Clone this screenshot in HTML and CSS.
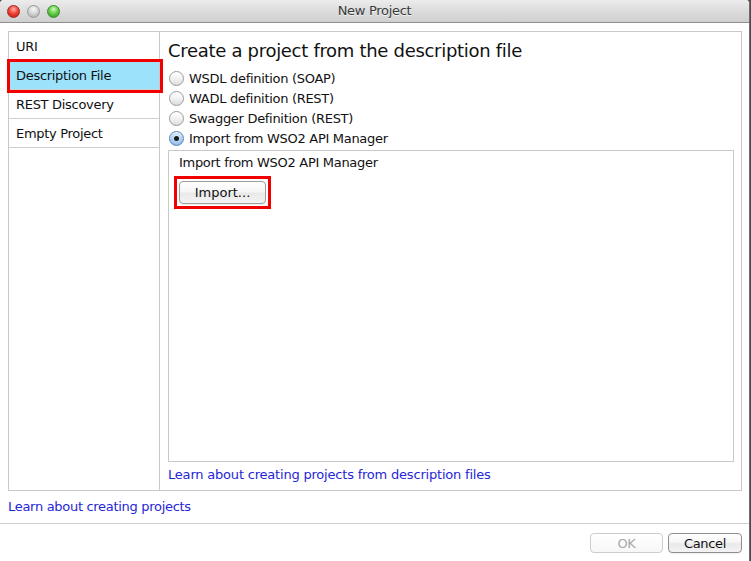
FILE: index.html
```html
<!DOCTYPE html>
<html lang="en">
<head>
<meta charset="utf-8">
<title>New Project</title>
<link rel="stylesheet" href="styles.css">
</head>
<body>
<div class="window">
  <div class="titlebar">
    <div class="lights">
      <span class="light light-close"></span>
      <span class="light light-min"></span>
      <span class="light light-zoom"></span>
    </div>
    <div class="title">New Project</div>
    <div class="spacer"></div>
  </div>
  <div class="content">
    <div class="panel">
      <ul class="list">
        <li class="item">URI</li>
        <li class="item item-selected">Description File<span class="mark mark-item"></span></li>
        <li class="item">REST Discovery</li>
        <li class="item">Empty Project</li>
      </ul>
      <div class="detail">
        <h1 class="heading">Create a project from the description file</h1>
        <div class="radios">
          <div class="radio"><span class="dot"></span><span>WSDL definition (SOAP)</span></div>
          <div class="radio"><span class="dot"></span><span>WADL definition (REST)</span></div>
          <div class="radio"><span class="dot"></span><span>Swagger Definition (REST)</span></div>
          <div class="radio"><span class="dot dot-on"></span><span>Import from WSO2 API Manager</span></div>
        </div>
        <div class="inner">
          <div class="inner-label">Import from WSO2 API Manager</div>
          <div class="btn-row">
            <span class="btn-wrap"><button class="btn btn-import">Import...</button><span class="mark mark-btn"></span></span>
          </div>
        </div>
        <a class="link link-detail">Learn about creating projects from description files</a>
      </div>
    </div>
    <a class="link link-main">Learn about creating projects</a>
  </div>
  <div class="footer">
    <button class="btn btn-ok" disabled>OK</button>
    <button class="btn btn-cancel">Cancel</button>
  </div>
</div>
</body>
</html>
```

FILE: styles.css
```css
html, body {
  margin: 0;
  padding: 0;
}

body {
  width: 751px;
  height: 561px;
  overflow: hidden;
  background: #4a4f4a;
  font-family: "DejaVu Sans", "Liberation Sans", sans-serif;
  font-size: 13px;
  letter-spacing: -0.3px;
  color: #111;
}

.window {
  width: 749px;
  height: 561px;
  background: #ffffff;
  border-right: 1px solid #6b6b6b;
  display: flex;
  flex-direction: column;
  border-top-left-radius: 4px;
  border-top-right-radius: 4px;
  overflow: hidden;
}

/* Title bar */
.titlebar {
  height: 22px;
  flex: none;
  border-bottom: 1px solid #8f8f8f;
  background: linear-gradient(#ececec, #dcdcdc 50%, #cfcfcf);
  display: grid;
  grid-template-columns: 1fr auto 1fr;
  align-items: center;
}

.lights {
  display: flex;
  gap: 7px;
  padding-left: 7px;
  padding-top: 1px;
}

.light {
  width: 13px;
  height: 13px;
  border-radius: 50%;
  box-sizing: border-box;
}

.light-close {
  background: radial-gradient(circle at 50% 30%, #ffb3aa 0, #f0463a 45%, #b9160d 100%);
  border: 1px solid #a3271f;
}

.light-min {
  background: radial-gradient(circle at 50% 30%, #fafafa 0, #d6d6d6 45%, #a6a6a6 100%);
  border: 1px solid #9a9a9a;
}

.light-zoom {
  background: radial-gradient(circle at 50% 30%, #d5f8c4 0, #66d04a 45%, #2e8f1b 100%);
  border: 1px solid #3a8a2a;
}

.title {
  font-size: 13px;
  color: #3a3a3a;
  text-shadow: 0 1px 0 rgba(255, 255, 255, 0.7);
  line-height: 22px;
}

/* Content */
.content {
  flex: none;
  padding: 8px 7px 8px 8px;
  display: flex;
  flex-direction: column;
}

.panel {
  height: 458px;
  border: 1px solid #c9c9c9;
  display: flex;
}

.list {
  list-style: none;
  margin: 0;
  padding: 0;
  width: 150px;
  flex: none;
  border-right: 1px solid #c9c9c9;
}

.item {
  position: relative;
  height: 28px;
  line-height: 30px;
  padding-left: 7px;
  border-bottom: 1px solid #d0d0d0;
}

.item-selected {
  background: #9be2fa;
}

.mark {
  position: absolute;
  border: 3px solid #f20000;
  pointer-events: none;
}

.mark-item {
  left: -2px;
  right: -4px;
  top: -2px;
  bottom: -4px;
}

.detail {
  flex: 1;
  display: flex;
  flex-direction: column;
  padding: 8px 7px 7px 8px;
}

.heading {
  margin: 0;
  font-weight: normal;
  font-size: 18px;
  letter-spacing: -0.3px;
  line-height: 22px;
  color: #111;
}

.radios {
  margin-top: 6px;
  display: flex;
  flex-direction: column;
}

.radio {
  height: 20px;
  display: flex;
  align-items: center;
  gap: 5px;
  padding-left: 1px;
}

.dot {
  width: 15px;
  height: 15px;
  box-sizing: border-box;
  border-radius: 50%;
  border: 1px solid #9a9a9a;
  background: linear-gradient(#ffffff, #f2f2f2 50%, #dcdcdc);
  box-shadow: inset 0 1px 1px rgba(255, 255, 255, 0.9);
  display: flex;
  align-items: center;
  justify-content: center;
}

.dot-on {
  border-color: #5d86bb;
  background: radial-gradient(circle at 50% 35%, #e6f1fc 0, #a9cdf2 55%, #6ea4de 100%);
}

.dot-on::after {
  content: "";
  width: 5px;
  height: 5px;
  border-radius: 50%;
  background: #1b1b1b;
}

.inner {
  margin-top: 2px;
  flex: 1;
  border: 1px solid #c9c9c9;
  padding: 3px 10px 0 10px;
}

.inner-label {
  line-height: 18px;
}

.btn-row {
  margin-top: 9px;
  display: flex;
}

.btn-wrap {
  position: relative;
  display: inline-flex;
}

.mark-btn {
  left: -5px;
  right: -5px;
  top: -5px;
  bottom: -5px;
}

.btn {
  font-family: "DejaVu Sans", "Liberation Sans", sans-serif;
  font-size: 13px;
  letter-spacing: -0.3px;
  color: #111;
  border: 1px solid #9d9d9d;
  border-radius: 4px;
  background: linear-gradient(#ffffff, #f6f6f6 45%, #e9e9e9 55%, #f3f3f3);
  padding: 0;
  margin: 0;
  box-shadow: 0 1px 0 rgba(0, 0, 0, 0.06);
}

.btn-import {
  width: 87px;
  height: 23px;
  letter-spacing: 0;
}

.link {
  color: #2626d6;
  line-height: 16px;
  cursor: pointer;
}

.link-detail {
  margin-top: 5px;
  letter-spacing: -0.2px;
}

.link-main {
  margin-top: 8px;
}

/* Footer */
.footer {
  flex: 1;
  border-top: 1px solid #cfcfcf;
  display: flex;
  justify-content: flex-end;
  align-items: flex-start;
  gap: 5px;
  padding: 9px 7px 0 0;
}

.btn-ok,
.btn-cancel {
  height: 20px;
}

.btn-ok {
  width: 73px;
  color: #a8a8a8;
  border-color: #cdcdcd;
  background: linear-gradient(#ffffff, #f7f7f7);
  box-shadow: none;
}

.btn-cancel {
  width: 74px;
  border-color: #8f8f8f;
}
```
